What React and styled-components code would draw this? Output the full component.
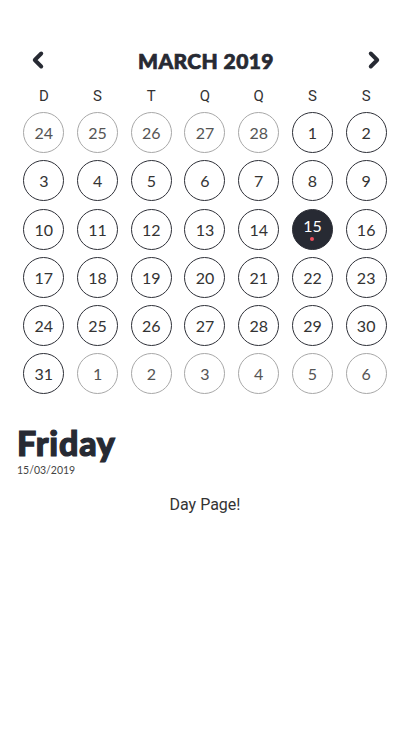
import React from "react";
import styled, { createGlobalStyle } from "styled-components";
import { ChevronLeft, ChevronRight } from "lucide-react";

const Global = createGlobalStyle`
  html, body { margin: 0; padding: 0; background: #fff; }
  body { font-family: Roboto, "Liberation Sans", sans-serif; }
`;

const Page = styled.div`
  width: 410px;
  min-height: 734px;
  background: #fff;
  padding: 44px 17px 0;
  box-sizing: border-box;
`;

const Header = styled.div`
  display: flex;
  align-items: center;
  justify-content: space-between;
  height: 32px;
  padding: 0 6px 0 8px;
`;

const NavButton = styled.button`
  border: none;
  background: none;
  padding: 0;
  display: flex;
  color: #272a33;
  cursor: pointer;
`;

const Month = styled.h1`
  margin: 0;
  font-family: Lato, "Liberation Sans", sans-serif;
  font-weight: 900;
  font-size: 21px;
  letter-spacing: 0.4px;
  color: #272a33;
  -webkit-text-stroke: 0.7px #272a33;
`;

const Grid = styled.div`
  display: grid;
  grid-template-columns: repeat(7, 1fr);
  row-gap: 7.2px;
  justify-items: center;
  margin-top: 9px;
`;

const WeekDay = styled.div`
  font-family: Roboto, sans-serif;
  font-size: 15px;
  color: #333;
  height: 22px;
  line-height: 22px;
  margin-bottom: -2px;
`;

const Day = styled.div`
  position: relative;
  width: 41px;
  height: 41px;
  box-sizing: border-box;
  border-radius: 50%;
  border: 1px solid ${(p) => (p.$outside ? "#a8a8a8" : "#2e3038")};
  background: ${(p) => (p.$selected ? "#272a33" : "transparent")};
  color: ${(p) => (p.$selected ? "#fff" : p.$outside ? "#555" : "#333")};
  display: flex;
  align-items: center;
  justify-content: center;
  font-family: Lato, "Noto Sans", sans-serif;
  font-weight: 400;
  font-size: 16px;
  padding-bottom: ${(p) => (p.$selected ? "7px" : "0")};
`;

const Dot = styled.span`
  position: absolute;
  left: 50%;
  bottom: 8px;
  width: 4px;
  height: 4px;
  margin-left: -2px;
  border-radius: 50%;
  background: #f0505e;
`;

const DayInfo = styled.section`
  margin-top: 30px;
`;

const DayName = styled.h2`
  margin: 0;
  font-family: Lato, "Liberation Sans", sans-serif;
  font-weight: 900;
  font-size: 34px;
  line-height: 38px;
  color: #272a33;
  letter-spacing: 0.8px;
  -webkit-text-stroke: 1.2px #272a33;
`;

const DateText = styled.div`
  font-family: Lato, sans-serif;
  font-size: 10.5px;
  line-height: 13px;
  color: #444;
  margin-top: 2px;
`;

const Content = styled.p`
  margin: 18px 0 0;
  text-align: center;
  font-family: Roboto, sans-serif;
  font-size: 16px;
  color: #333;
`;

const weekDays = ["D", "S", "T", "Q", "Q", "S", "S"];

function buildDays() {
  const days = [];
  [24, 25, 26, 27, 28].forEach((d) => days.push({ d, outside: true }));
  for (let d = 1; d <= 31; d++) days.push({ d, outside: false, selected: d === 15 });
  [1, 2, 3, 4, 5, 6].forEach((d) => days.push({ d, outside: true }));
  return days;
}

export default function App() {
  const days = buildDays();
  return (
    <Page>
      <Global />
      <Header>
        <NavButton aria-label="previous">
          <ChevronLeft size={26} strokeWidth={3.6} />
        </NavButton>
        <Month>MARCH 2019</Month>
        <NavButton aria-label="next">
          <ChevronRight size={26} strokeWidth={3.6} />
        </NavButton>
      </Header>
      <Grid>
        {weekDays.map((w, i) => (
          <WeekDay key={i}>{w}</WeekDay>
        ))}
        {days.map((day, i) => (
          <Day key={i} $outside={day.outside} $selected={day.selected}>
            {day.d}
            {day.selected && <Dot />}
          </Day>
        ))}
      </Grid>
      <DayInfo>
        <DayName>Friday</DayName>
        <DateText>15/03/2019</DateText>
      </DayInfo>
      <Content>Day Page!</Content>
    </Page>
  );
}
